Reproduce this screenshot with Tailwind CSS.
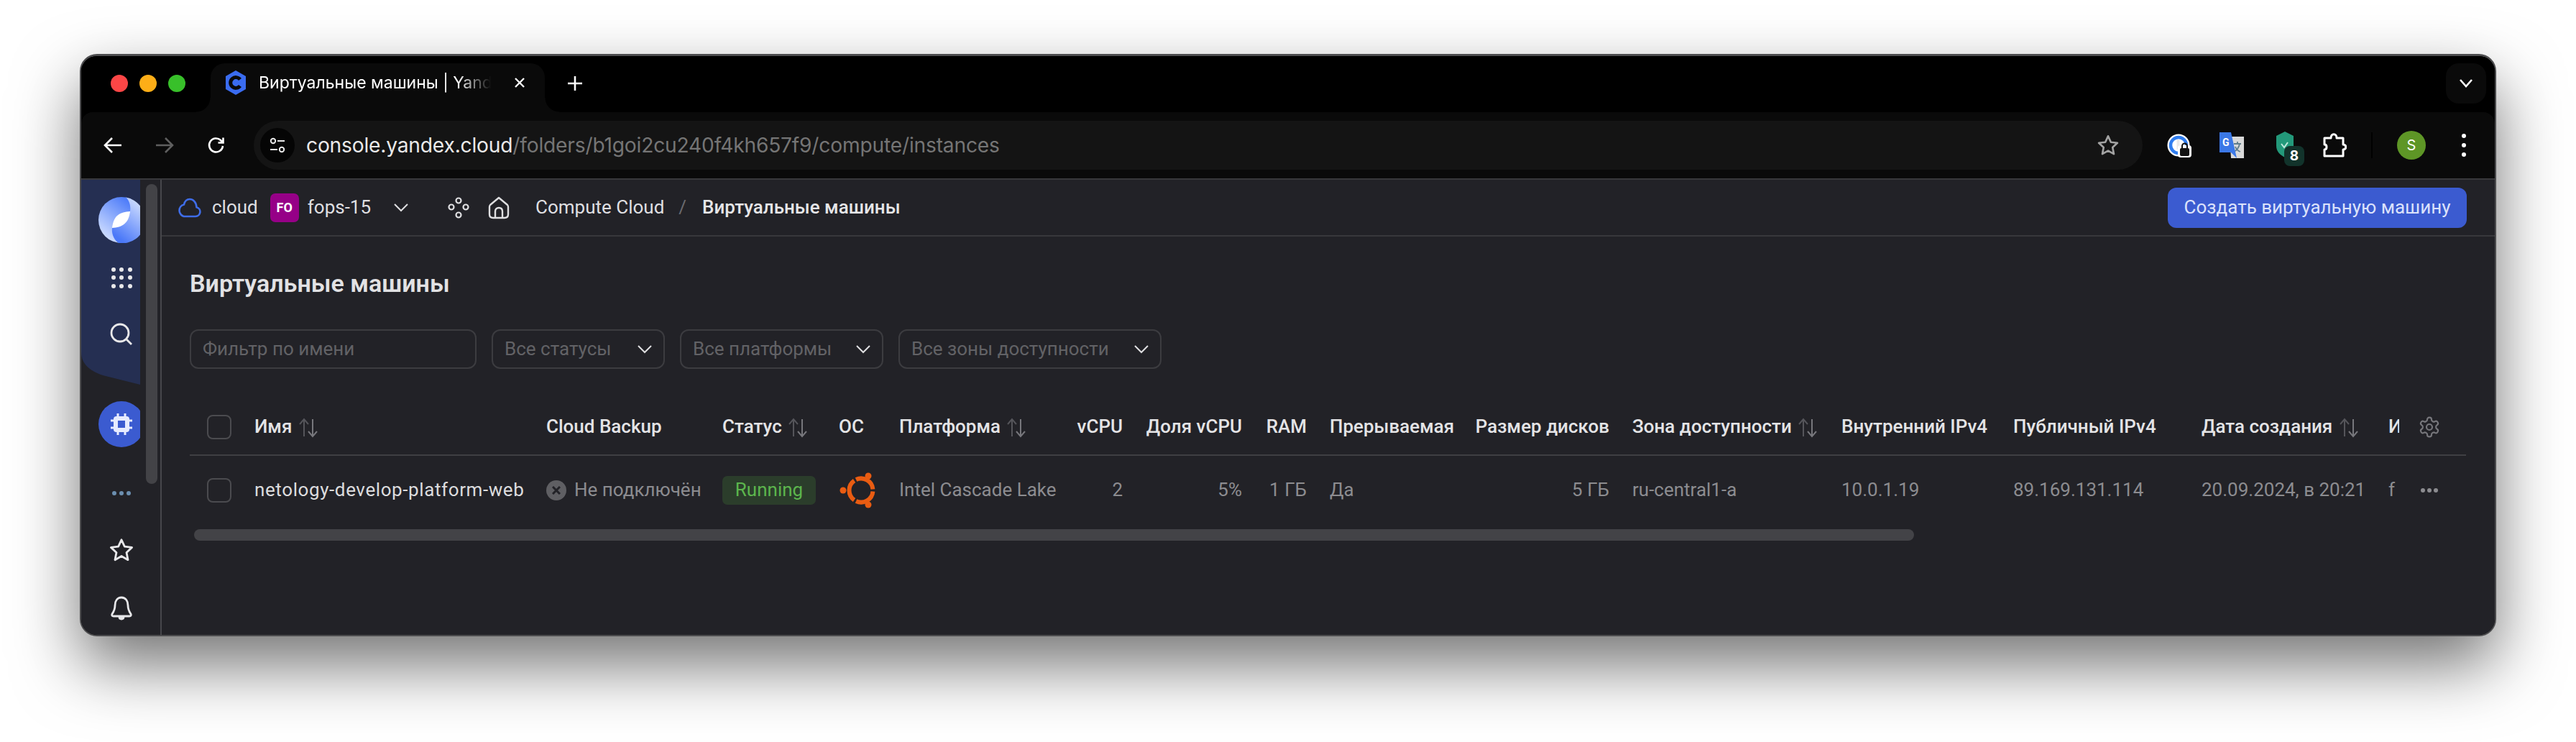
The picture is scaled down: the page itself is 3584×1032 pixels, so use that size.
<!DOCTYPE html>
<html lang="en">
<head>
<meta charset="UTF-8">
<title>Виртуальные машины | Yandex Cloud</title>
<script src="https://cdn.jsdelivr.net/npm/@tailwindcss/browser@4"></script>
</head>
<body class="bg-white w-[3584px] h-[1032px] overflow-hidden [font-family:Roboto,sans-serif]">
<div class="pl-[111px] pt-[75px]">
  <div class="w-[3362px] h-[810px] rounded-[24px] overflow-hidden bg-black flex flex-col border-2 border-t-[3px] border-[#4c4c4e] shadow-[0_40px_90px_rgba(0,0,0,0.55)]">

    <!-- tab strip -->
    <div class="h-[78px] shrink-0 flex items-start bg-black pt-[10px] [font-family:Inter,sans-serif]">
      <div class="w-[180px] h-[60px] flex items-center pl-[41px] gap-[16px] shrink-0 -mt-[2px]">
        <span class="w-[24px] h-[24px] rounded-full bg-[#fc4646]"></span>
        <span class="w-[24px] h-[24px] rounded-full bg-[#fdae17]"></span>
        <span class="w-[24px] h-[24px] rounded-full bg-[#38c02a]"></span>
      </div>
      <div class="relative w-[465px] h-[68px] shrink-0 bg-[#0a0a0a] rounded-t-[20px] flex items-center pl-[20px] text-white">
        <div class="absolute -left-[20px] bottom-0 w-[20px] h-[20px] bg-[radial-gradient(circle_at_0_0,#000_19px,#0a0a0a_20px)]"></div>
        <div class="absolute -right-[20px] bottom-0 w-[20px] h-[20px] bg-[radial-gradient(circle_at_100%_0,#000_19px,#0a0a0a_20px)]"></div>
        <svg class="w-[30px] h-[34px] shrink-0 -mt-[14px]" viewBox="0 0 30 34"><path d="M15 0 29 8v18l-14 8-14-8V8z" fill="#3a6cf0"/><path d="M21 12.5a7.4 7.4 0 1 0 0 9" fill="none" stroke="#0a0a0a" stroke-width="5"/></svg>
        <span class="ml-[17px] w-[330px] -mt-[14px] text-[23px] whitespace-nowrap [mask-image:linear-gradient(90deg,#000_84%,transparent_98%)]">Виртуальные машины | Yand</span>
        <svg class="w-[18px] h-[18px] ml-[24px] -mt-[14px]" viewBox="0 0 18 18" stroke="#fff" stroke-width="2.4"><path d="M3 3l12 12M15 3 3 15"/></svg>
      </div>
      <svg class="w-[24px] h-[24px] ml-[30px] mt-[16px]" viewBox="0 0 24 24" stroke="#fff" stroke-width="2.6"><path d="M12 2v20M2 12h20"/></svg>
      <div class="ml-auto mr-[12px] w-[56px] h-[56px] bg-[#0a0a0a] rounded-[18px] flex items-center justify-center">
        <svg class="w-[20px] h-[14px]" viewBox="0 0 20 14" fill="none" stroke="#fff" stroke-width="2.6"><path d="M2 2l8 9 8-9"/></svg>
      </div>
    </div>

    <!-- toolbar -->
    <div class="h-[92px] shrink-0 bg-[#0a0a0a] rounded-t-[16px] flex items-center [font-family:Inter,sans-serif]">
      <div class="w-[240px] shrink-0 flex items-center pl-[31px] gap-[46px]">
        <svg class="w-[26px] h-[26px]" viewBox="0 0 26 26" fill="none" stroke="#fff" stroke-width="2.6"><path d="M25 13H2M12 3 2 13l10 10"/></svg>
        <svg class="w-[26px] h-[26px]" viewBox="0 0 26 26" fill="none" stroke="#5f5f5f" stroke-width="2.6"><path d="M1 13h23M14 3l10 10-10 10"/></svg>
        <svg class="w-[26px] h-[26px]" viewBox="0 0 26 26" fill="none" stroke="#fff" stroke-width="2.6"><path d="M22 14a9.5 9.5 0 1 1-3-8l3 3M22.500 2.500V9.500H15.500"/></svg>
      </div>
      <div class="w-[2628px] h-[68px] shrink-0 rounded-full bg-[#141414] flex items-center pl-[9px] pr-[32px]">
        <span class="w-[48px] h-[48px] rounded-full bg-[#050505] flex items-center justify-center shrink-0">
          <svg class="w-[24px] h-[24px]" viewBox="0 0 24 24" fill="none" stroke="#e8e8e8" stroke-width="2"><circle cx="6" cy="6" r="3.200"/><path d="M12 6h10M2 18h10"/><circle cx="18" cy="18" r="3.200"/></svg>
        </span>
        <span class="ml-[16px] text-[28.200px] tracking-[-0.2px] text-[#e9e9e9] whitespace-nowrap">console.yandex.cloud<span class="text-[#757575]">/folders/b1goi2cu240f4kh657f9/compute/instances</span></span>
        <svg class="ml-auto w-[32px] h-[32px]" viewBox="0 0 24 24" fill="none" stroke="#a2a2a2" stroke-width="2" stroke-linejoin="round"><path d="M12 2.500l2.900 6.300 6.800.8-5 4.700 1.300 6.800-6-3.400-6 3.400 1.300-6.800-5-4.700 6.800-.8z"/></svg>
      </div>
      <div class="flex items-center ml-[34px]">
        <!-- 1password -->
        <svg class="w-[34px] h-[34px]" viewBox="0 0 34 34"><circle cx="16" cy="17" r="15.500" fill="#fff"/><circle cx="16" cy="17" r="11" fill="none" stroke="#2f7df0" stroke-width="4.500"/><rect x="13.500" y="9" width="4" height="14" fill="#e8e8e8"/><rect x="15" y="17" width="19" height="17" rx="4" fill="#fff"/><rect x="18" y="21" width="13" height="11" rx="2" fill="#111"/><path d="M21 21v-3a3.500 3.500 0 0 1 7 0v3" fill="none" stroke="#111" stroke-width="2"/></svg>
        <!-- translate -->
        <svg class="w-[34px] h-[36px] ml-[39px]" viewBox="0 0 34 36"><path d="M14 6h20v30H16z" fill="#d9d9d9"/><path d="M20 16h10M25 13v3M28 16c-1 6-5 10-8 11M22 20c1 3 4 6 7 7" fill="none" stroke="#607d8b" stroke-width="1.800"/><path d="M0 0h16l8 36-8-8H0z" fill="#3b78e7"/><text x="4" y="19" font-size="14" font-weight="700" fill="#fff" font-family="Roboto">G</text></svg>
        <!-- shield + badge -->
        <span class="relative w-[32px] h-[38px] ml-[44px]">
          <svg class="w-[26px] h-[36px]" viewBox="0 0 26 36"><path d="M13 0l12 6v14c0 8-6 13-12 16C7 33 1 28 1 20V6z" fill="#23997a"/><path d="M8 17l4 5 5-7" fill="none" stroke="#bfe9dc" stroke-width="2"/></svg>
          <span class="absolute left-[12px] top-[20px] w-[28px] h-[28px] rounded-[8px] bg-[#12332b] text-white text-[19px] font-bold flex items-center justify-center">8</span>
        </span>
        <!-- extensions -->
        <svg class="w-[34px] h-[36px] ml-[33px]" viewBox="0 0 34 36" fill="none" stroke="#fff" stroke-width="3" stroke-linejoin="round"><path d="M3 8h9c0-7 8-7 8 0h9v9c5 0 5 7 0 7v9H3v-9c4 0 4-7 0-7z"/></svg>
        <span class="w-[2px] h-[36px] bg-black ml-[34px]"></span>
        <span class="w-[40px] h-[40px] rounded-full bg-[#5e9626] text-white text-[20px] flex items-center justify-center ml-[34px]">S</span>
        <svg class="w-[8px] h-[34px] ml-[49px]" viewBox="0 0 8 34" fill="#fff"><circle cx="4" cy="4" r="3"/><circle cx="4" cy="17" r="3"/><circle cx="4" cy="30" r="3"/></svg>
      </div>
    </div>

    <!-- page -->
    <div class="flex-1 flex min-h-0 bg-[#222227] border-t-2 border-[#38383c]">
      <!-- aside nav -->
      <nav class="relative w-[112px] shrink-0 border-r-2 border-[#47474b]">
        <svg class="absolute left-0 top-0 w-[82px] h-[285px]" viewBox="0 0 82 285"><path d="M0 0h82v285L30 272C12 266 0 256 0 240z" fill="#252f52"/></svg>
        <div class="absolute left-[90px] top-[6px] w-[16px] h-[417px] rounded-full bg-[#434347]"></div>
        <div class="relative w-[82px] h-full overflow-hidden pl-[24px] pt-[24px]">
          <svg class="block w-[64px] h-[64px]" viewBox="0 0 64 64">
            <defs>
              <linearGradient id="logoLeft" gradientUnits="userSpaceOnUse" x1="40" y1="5" x2="5" y2="50"><stop offset="0" stop-color="#4f7df9"/><stop offset="1" stop-color="#c9d9ff"/></linearGradient>
              <linearGradient id="logoRight" gradientUnits="userSpaceOnUse" x1="60" y1="12" x2="25" y2="55"><stop offset="0" stop-color="#c9d9ff"/><stop offset="1" stop-color="#4a78f8"/></linearGradient>
            </defs>
            <circle cx="32" cy="32" r="32" fill="url(#logoLeft)"/>
            <path d="M38 0C44 6 45 14 44 20L19 43C18 52 22 60 28 64A32 32 0 0 0 38 .6z" fill="url(#logoRight)"/>
            <path d="M44 20C30 21 21 25 19 43 33 42 42 37 44 20z" fill="#fff"/>
          </svg>
          <span class="mt-[16px] w-[64px] h-[64px] grid grid-cols-[6px_6px_6px] gap-[5.500px] content-center justify-center">
            <i class="w-[6px] h-[6px] rounded-full bg-[#e8e8ea]"></i><i class="w-[6px] h-[6px] rounded-full bg-[#e8e8ea]"></i><i class="w-[6px] h-[6px] rounded-full bg-[#e8e8ea]"></i>
            <i class="w-[6px] h-[6px] rounded-full bg-[#e8e8ea]"></i><i class="w-[6px] h-[6px] rounded-full bg-[#e8e8ea]"></i><i class="w-[6px] h-[6px] rounded-full bg-[#e8e8ea]"></i>
            <i class="w-[6px] h-[6px] rounded-full bg-[#e8e8ea]"></i><i class="w-[6px] h-[6px] rounded-full bg-[#e8e8ea]"></i><i class="w-[6px] h-[6px] rounded-full bg-[#e8e8ea]"></i>
          </span>
          <span class="mt-[15px] w-[64px] h-[64px] flex items-center justify-center">
            <svg class="w-[32px] h-[32px]" viewBox="0 0 32 32" fill="none" stroke="#e8e8ea" stroke-width="2.800"><circle cx="14" cy="14" r="12"/><path d="M23 23l7 7"/></svg>
          </span>
          <span class="mt-[61px] w-[64px] h-[64px] rounded-full bg-[#3b5bd0] flex items-center justify-center">
            <svg class="w-[30px] h-[30px]" viewBox="0 0 30 30" fill="none"><path d="M10 0v30M20 0v30M0 10h30M0 20h30" stroke="#e6ebff" stroke-width="3"/><rect x="4" y="4" width="22" height="22" rx="4" fill="#e6ebff"/><rect x="10" y="10" width="10" height="10" fill="#3b5bd0"/></svg>
          </span>
          <span class="mt-[32px] w-[64px] h-[64px] flex items-center justify-center gap-[4px]">
            <i class="w-[6px] h-[6px] rounded-full bg-[#6c8fb0]"></i><i class="w-[6px] h-[6px] rounded-full bg-[#6c8fb0]"></i><i class="w-[6px] h-[6px] rounded-full bg-[#6c8fb0]"></i>
          </span>
          <span class="mt-[15px] w-[64px] h-[64px] flex items-center justify-center">
            <svg class="w-[36px] h-[36px]" viewBox="0 0 24 24" fill="none" stroke="#e8e8ea" stroke-width="1.900" stroke-linejoin="round"><path d="M12 2.500l2.900 6.300 6.800.8-5 4.700 1.300 6.800-6-3.400-6 3.400 1.300-6.800-5-4.700 6.800-.8z"/></svg>
          </span>
          <span class="mt-[17px] w-[64px] h-[64px] flex items-center justify-center">
            <svg class="w-[32px] h-[34px]" viewBox="0 0 32 34" fill="none" stroke="#e8e8ea" stroke-width="2.800" stroke-linejoin="round"><path d="M16 2c-6 0-9 5-9 11 0 6-2 9-4 12-1 2 0 3 2 3h22c2 0 3-1 2-3-2-3-4-6-4-12 0-6-3-11-9-11z"/><path d="M13 29c0 4 6 4 6 0" fill="#e8e8ea"/></svg>
          </span>
        </div>
      </nav>

      <main class="flex-1 min-w-0 flex flex-col">
        <!-- breadcrumbs header -->
        <header class="h-[79px] shrink-0 border-b-2 border-[#38383c] flex items-center pl-[23px] pr-[39px] text-[26px] text-[#dfdfe1]">
          <svg class="w-[32px] h-[28px] shrink-0" viewBox="0 0 32 28" fill="none" stroke="#3f6de8" stroke-width="2.600"><path d="M9 26h15a6.500 6.500 0 0 0 1.500-12.800C25 6 20.500 2 16 2c-4 0-7 3-8 7.500C4 10.500 1.500 14 1.500 18c0 4 3.500 8 7.500 8z"/></svg>
          <span class="ml-[15px]">cloud</span>
          <span class="ml-[17px] w-[40px] h-[40px] rounded-[7px] bg-[#960087] text-white text-[18px] font-bold flex items-center justify-center">FO</span>
          <span class="ml-[12px]">fops-15</span>
          <svg class="ml-[32px] w-[20px] h-[12px]" viewBox="0 0 20 12" fill="none" stroke="#dfdfe1" stroke-width="2"><path d="M1 1l9 9 9-9"/></svg>
          <svg class="ml-[55px] w-[30px] h-[30px]" viewBox="0 0 30 30" fill="none" stroke="#dfdfe1" stroke-width="2.200"><circle cx="15" cy="5" r="3.500"/><circle cx="5" cy="14" r="3.500"/><circle cx="25" cy="14" r="3.500"/><circle cx="15" cy="25" r="3.500"/></svg>
          <svg class="ml-[26px] w-[30px] h-[32px]" viewBox="0 0 30 32" fill="none" stroke="#dfdfe1" stroke-width="2.400" stroke-linejoin="round"><path d="M15 2 3 12c-1 1-1 2-1 3v10c0 3 2 5 5 5h16c3 0 5-2 5-5V15c0-1 0-2-1-3z"/><path d="M10 30v-9c0-3 2-5 5-5s5 2 5 5v9"/></svg>
          <span class="ml-[36px]">Compute Cloud</span>
          <span class="ml-[20px] text-[#6b6b6f]">/</span>
          <span class="ml-[22px] font-medium text-[#e6e6e8]">Виртуальные машины</span>
          <button class="ml-auto w-[416px] h-[56px] rounded-[12px] bg-[#3b5bd0] text-[#dbe2fb] text-[26px]">Создать виртуальную машину</button>
        </header>

        <div class="pl-[39px] pr-[42px]">
          <h1 class="mt-[45px] h-[40px] flex items-center text-[34px] font-semibold text-[#e2e2e4]">Виртуальные машины</h1>

          <div class="mt-[44px] flex gap-[21px] text-[26px] text-[#626266]">
            <div class="w-[399px] h-[55px] rounded-[12px] border-2 border-[#3c3c40] flex items-center px-[16px]">Фильтр по имени</div>
            <div class="w-[241px] h-[55px] rounded-[12px] border-2 border-[#3c3c40] flex items-center justify-between px-[16px]">Все статусы
              <svg class="w-[20px] h-[12px]" viewBox="0 0 20 12" fill="none" stroke="#dfdfe1" stroke-width="2"><path d="M1 1l9 9 9-9"/></svg></div>
            <div class="w-[283px] h-[55px] rounded-[12px] border-2 border-[#3c3c40] flex items-center justify-between px-[16px]">Все платформы
              <svg class="w-[20px] h-[12px]" viewBox="0 0 20 12" fill="none" stroke="#dfdfe1" stroke-width="2"><path d="M1 1l9 9 9-9"/></svg></div>
            <div class="w-[366px] h-[55px] rounded-[12px] border-2 border-[#3c3c40] flex items-center justify-between px-[16px]">Все зоны доступности
              <svg class="w-[20px] h-[12px]" viewBox="0 0 20 12" fill="none" stroke="#dfdfe1" stroke-width="2"><path d="M1 1l9 9 9-9"/></svg></div>
          </div>

          <table class="mt-[42px] table-fixed w-[3167px] border-collapse text-[26px] whitespace-nowrap">
            <colgroup>
              <col class="w-[74px]"><col class="w-[406px]"><col class="w-[245px]"><col class="w-[162px]"><col class="w-[84px]"><col class="w-[247px]"><col class="w-[96px]"><col class="w-[166px]"><col class="w-[90px]"><col class="w-[205px]"><col class="w-[216px]"><col class="w-[291px]"><col class="w-[239px]"><col class="w-[262px]"><col class="w-[260px]"><col class="w-[56px]"><col class="w-[68px]">
            </colgroup>
            <thead>
              <tr class="h-[78px] border-b-2 border-[#3f3f43] text-[#e4e4e6]">
                <th class="pl-[24px]"><span class="block w-[34px] h-[34px] rounded-[8px] border-2 border-[#4b4b4f]"></span></th>
                <th class="pl-[16px] text-left font-medium">Имя <svg class="inline w-[28px] h-[30px] ml-[2px]" viewBox="0 0 28 30" fill="none" stroke-width="2"><path d="M8 27V4M2 10l6-7 6 7" stroke="#55555a"/><path d="M20 3v23M14 20l6 7 6-7" stroke="#77777c"/></svg></th>
                <th class="pl-[16px] text-left font-medium">Cloud Backup</th>
                <th class="pl-[16px] text-left font-medium">Статус <svg class="inline w-[28px] h-[30px] ml-[2px]" viewBox="0 0 28 30" fill="none" stroke-width="2"><path d="M8 27V4M2 10l6-7 6 7" stroke="#55555a"/><path d="M20 3v23M14 20l6 7 6-7" stroke="#77777c"/></svg></th>
                <th class="pl-[16px] text-left font-medium">ОС</th>
                <th class="pl-[16px] text-left font-medium">Платформа <svg class="inline w-[28px] h-[30px] ml-[2px]" viewBox="0 0 28 30" fill="none" stroke-width="2"><path d="M8 27V4M2 10l6-7 6 7" stroke="#55555a"/><path d="M20 3v23M14 20l6 7 6-7" stroke="#77777c"/></svg></th>
                <th class="pr-[16px] text-right font-medium">vCPU</th>
                <th class="pr-[16px] text-right font-medium">Доля vCPU</th>
                <th class="pr-[16px] text-right font-medium">RAM</th>
                <th class="pl-[16px] text-left font-medium">Прерываемая</th>
                <th class="pr-[16px] text-right font-medium">Размер дисков</th>
                <th class="pl-[16px] text-left font-medium">Зона доступности <svg class="inline w-[28px] h-[30px] ml-[2px]" viewBox="0 0 28 30" fill="none" stroke-width="2"><path d="M8 27V4M2 10l6-7 6 7" stroke="#55555a"/><path d="M20 3v23M14 20l6 7 6-7" stroke="#77777c"/></svg></th>
                <th class="pl-[16px] text-left font-medium">Внутренний IPv4</th>
                <th class="pl-[16px] text-left font-medium">Публичный IPv4</th>
                <th class="pl-[16px] text-left font-medium">Дата создания <svg class="inline w-[28px] h-[30px] ml-[2px]" viewBox="0 0 28 30" fill="none" stroke-width="2"><path d="M8 27V4M2 10l6-7 6 7" stroke="#55555a"/><path d="M20 3v23M14 20l6 7 6-7" stroke="#77777c"/></svg></th>
                <th class="pl-[16px] text-left font-medium"><span class="block w-[15px] overflow-hidden">И</span></th>
                <th class="pl-[1px]"><svg class="w-[32px] h-[34px]" viewBox="0 0 24 24" fill="none" stroke="#77777c" stroke-width="1.600" stroke-linejoin="round"><path d="M12.220 2h-.44a2 2 0 0 0-2 2v.18a2 2 0 0 1-1 1.730l-.43.250a2 2 0 0 1-2 0l-.15-.08a2 2 0 0 0-2.730.730l-.22.380a2 2 0 0 0 .730 2.730l.150.100a2 2 0 0 1 1 1.720v.510a2 2 0 0 1-1 1.740l-.150.090a2 2 0 0 0-.730 2.730l.220.380a2 2 0 0 0 2.730.730l.150-.08a2 2 0 0 1 2 0l.430.250a2 2 0 0 1 1 1.730V20a2 2 0 0 0 2 2h.440a2 2 0 0 0 2-2v-.18a2 2 0 0 1 1-1.730l.430-.250a2 2 0 0 1 2 0l.150.080a2 2 0 0 0 2.730-.730l.220-.390a2 2 0 0 0-.730-2.730l-.150-.080a2 2 0 0 1-1-1.740v-.500a2 2 0 0 1 1-1.740l.150-.090a2 2 0 0 0 .730-2.730l-.220-.380a2 2 0 0 0-2.730-.730l-.150.080a2 2 0 0 1-2 0l-.430-.250a2 2 0 0 1-1-1.730V4a2 2 0 0 0-2-2z"/><circle cx="12" cy="12" r="3"/></svg></th>
              </tr>
            </thead>
            <tbody class="text-[#8c8c90]">
              <tr class="h-[96px]">
                <td class="pl-[24px]"><span class="block w-[34px] h-[34px] rounded-[8px] border-2 border-[#4b4b4f]"></span></td>
                <td class="pl-[16px] text-[#dcdcde] tracking-[0.6px]">netology-develop-platform-web</td>
                <td class="pl-[16px]"><span class="flex items-center gap-[11px]"><span class="w-[28px] h-[28px] rounded-full bg-[#5f5f63] flex items-center justify-center"><svg class="w-[12px] h-[12px]" viewBox="0 0 12 12" stroke="#222227" stroke-width="3"><path d="M1 1l10 10M11 1 1 11"/></svg></span>Не подключён</span></td>
                <td class="pl-[16px]"><span class="w-[130px] h-[40px] rounded-[7px] bg-[#2b3d2b] text-[#5cb54d] flex items-center justify-center">Running</span></td>
                <td class="pl-[17px]"><svg class="w-[60px] h-[60px]" viewBox="-30 -30 60 60" fill="none"><path d="M-6.970-14.950A16.500 16.500 0 0 1 16.440-1.440M16.440 1.440A16.500 16.500 0 0 1-6.970 14.950M-9.460 13.520A16.500 16.500 0 0 1-9.460-13.520" stroke="#e95c12" stroke-width="6"/><circle cx="-25" cy="0" r="4.500" fill="#e95c12"/><circle cx="10" cy="-20" r="4.500" fill="#e95c12"/><circle cx="10" cy="20" r="4.500" fill="#e95c12"/></svg></td>
                <td class="pl-[16px]">Intel Cascade Lake</td>
                <td class="pr-[16px] text-right">2</td>
                <td class="pr-[16px] text-right">5%</td>
                <td class="pr-[16px] text-right">1 ГБ</td>
                <td class="pl-[16px]">Да</td>
                <td class="pr-[16px] text-right">5 ГБ</td>
                <td class="pl-[16px]">ru-central1-a</td>
                <td class="pl-[16px]">10.0.1.19</td>
                <td class="pl-[16px]">89.169.131.114</td>
                <td class="pl-[16px]">20.09.2024, в 20:21</td>
                <td class="pl-[16px]">f</td>
                <td class="pl-[5px]"><span class="flex gap-[3px]"><i class="w-[6px] h-[6px] rounded-full bg-[#8c8c90]"></i><i class="w-[6px] h-[6px] rounded-full bg-[#8c8c90]"></i><i class="w-[6px] h-[6px] rounded-full bg-[#8c8c90]"></i></span></td>
              </tr>
            </tbody>
          </table>
          <div class="mt-[7px] ml-[6px] w-[2393px] h-[16px] rounded-full bg-[#434347]"></div>
        </div>
      </main>
    </div>
  </div>
</div>
</body>
</html>
